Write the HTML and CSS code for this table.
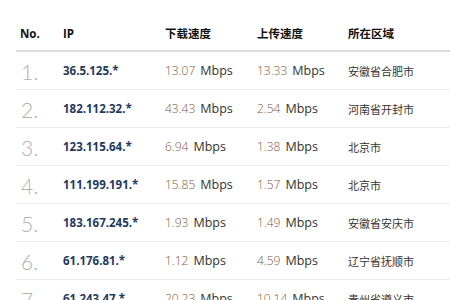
FILE: index.html
```html
<!DOCTYPE html>
<html lang="zh-CN">
<head>
<meta charset="utf-8">
<link rel="stylesheet" href="styles.css">
</head>
<body>
<div class="table">
  <div class="row head">
    <div class="c no">No.</div>
    <div class="c">IP</div>
    <div class="c">下载速度</div>
    <div class="c">上传速度</div>
    <div class="c">所在区域</div>
  </div>
  <div class="row">
    <div class="c idx">1.</div>
    <div class="c ip">36.5.125.*</div>
    <div class="c sp"><span class="v">13.07</span><span class="u">Mbps</span></div>
    <div class="c sp"><span class="v">13.33</span><span class="u">Mbps</span></div>
    <div class="c reg">安徽省合肥市</div>
  </div>
  <div class="row">
    <div class="c idx">2.</div>
    <div class="c ip">182.112.32.*</div>
    <div class="c sp"><span class="v">43.43</span><span class="u">Mbps</span></div>
    <div class="c sp"><span class="v">2.54</span><span class="u">Mbps</span></div>
    <div class="c reg">河南省开封市</div>
  </div>
  <div class="row">
    <div class="c idx">3.</div>
    <div class="c ip">123.115.64.*</div>
    <div class="c sp"><span class="v">6.94</span><span class="u">Mbps</span></div>
    <div class="c sp"><span class="v">1.38</span><span class="u">Mbps</span></div>
    <div class="c reg">北京市</div>
  </div>
  <div class="row">
    <div class="c idx">4.</div>
    <div class="c ip">111.199.191.*</div>
    <div class="c sp"><span class="v">15.85</span><span class="u">Mbps</span></div>
    <div class="c sp"><span class="v">1.57</span><span class="u">Mbps</span></div>
    <div class="c reg">北京市</div>
  </div>
  <div class="row">
    <div class="c idx">5.</div>
    <div class="c ip">183.167.245.*</div>
    <div class="c sp"><span class="v">1.93</span><span class="u">Mbps</span></div>
    <div class="c sp"><span class="v">1.49</span><span class="u">Mbps</span></div>
    <div class="c reg">安徽省安庆市</div>
  </div>
  <div class="row">
    <div class="c idx">6.</div>
    <div class="c ip">61.176.81.*</div>
    <div class="c sp"><span class="v">1.12</span><span class="u">Mbps</span></div>
    <div class="c sp"><span class="v">4.59</span><span class="u">Mbps</span></div>
    <div class="c reg">辽宁省抚顺市</div>
  </div>
  <div class="row">
    <div class="c idx">7.</div>
    <div class="c ip">61.243.47.*</div>
    <div class="c sp"><span class="v">20.23</span><span class="u">Mbps</span></div>
    <div class="c sp"><span class="v">10.14</span><span class="u">Mbps</span></div>
    <div class="c reg">贵州省遵义市</div>
  </div>
</div>
</body>
</html>
```

FILE: styles.css
```css
html, body {
  margin: 0;
  padding: 0;
  background: #ffffff;
  overflow: hidden;
}
body {
  font-family: "Open Sans", "Noto Sans CJK SC", sans-serif;
  color: #333;
  width: 450px;
  height: 300px;
}
.table {
  margin-left: 16px;
  padding-top: 16px;
}
.row {
  display: grid;
  grid-template-columns: 47px 102px 92px 91px 1fr;
  align-items: center;
  height: 37px;
  border-bottom: 1px solid #ececec;
}
.row.head {
  height: 34px;
  border-bottom: 2px solid #dcdcdc;
}
.c {
  white-space: nowrap;
  font-size: 12px;
}
.head .c {
  font-weight: 700;
  color: #111;
  font-size: 11.5px;
}
.head .no {
  padding-left: 4px;
}
.idx {
  font-family: "Lato", "Open Sans", sans-serif;
  font-weight: 300;
  font-size: 21px;
  color: #b0b0b0;
  padding-left: 5px;
  padding-top: 2px;
}
.ip {
  font-weight: 700;
  color: #1f3a5e;
  font-size: 11.5px;
}
.sp .v {
  color: #82563b;
  font-weight: 300;
  font-size: 12px;
  margin-right: 5px;
}
.sp .u {
  color: #333;
  font-size: 12.5px;
}
.reg {
  font-family: "Noto Sans CJK SC", sans-serif;
  font-size: 11px;
  color: #333;
}
```
